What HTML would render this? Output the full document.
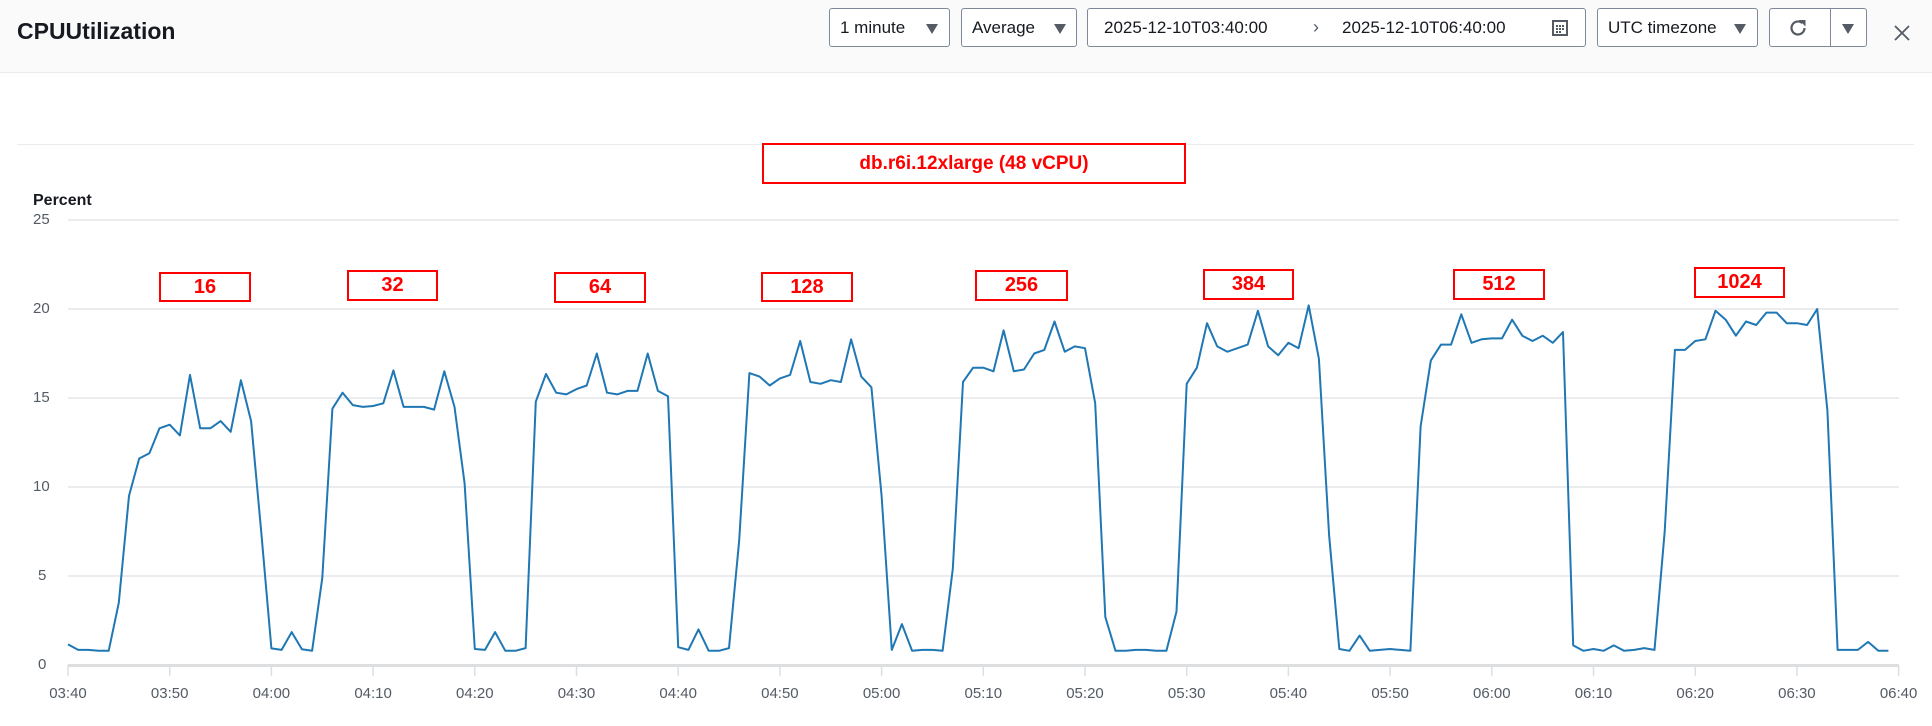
<!DOCTYPE html>
<html><head><meta charset="utf-8">
<style>
*{margin:0;padding:0;box-sizing:border-box}
body{width:1932px;height:726px;background:#fff;font-family:"Liberation Sans",sans-serif;position:relative;overflow:hidden;color:#16191f}
.hdr{position:absolute;left:0;top:0;width:1932px;height:73px;background:#fafafa;border-bottom:1px solid #e9ebed}
.title{position:absolute;left:17px;top:18px;font-size:23px;font-weight:bold;color:#16191f}
.btn{position:absolute;top:8px;height:39px;background:#fff;border:1px solid #7d8998;border-radius:3px;font-size:17px;line-height:37px;color:#16191f;padding-left:10px}
.tri{position:absolute;top:15px;width:0;height:0;border-left:6px solid transparent;border-right:6px solid transparent;border-top:10px solid #545b64}
.ann{position:absolute;border:2px solid #ff0000;color:#ff0000;font-weight:bold;font-size:20px;text-align:center;line-height:26px;background:#fff}
.yl{position:absolute;left:33px;font-size:15px;color:#545b64}
.xl{position:absolute;top:685px;font-size:15px;color:#545b64;width:60px;margin-left:-30px;text-align:center}
</style></head><body>
<div class="hdr">
 <div class="title">CPUUtilization</div>
 <div class="btn" style="left:829px;width:121px">1 minute<span class="tri" style="left:96px"></span></div>
 <div class="btn" style="left:961px;width:116px">Average<span class="tri" style="left:92px"></span></div>
 <div class="btn" style="left:1087px;width:499px;padding-left:16px">2025-12-10T03:40:00
  <span style="position:absolute;left:225px;top:0;color:#545b64;font-size:18px">&#x203A;</span>
  <span style="position:absolute;left:254px;top:0">2025-12-10T06:40:00</span>
  <svg style="position:absolute;left:464px;top:11px" width="16" height="16" viewBox="0 0 16 16"><rect x="1" y="1" width="14" height="14" fill="none" stroke="#545b64" stroke-width="2"/><g fill="#545b64"><rect x="4" y="5" width="2" height="2"/><rect x="7" y="5" width="2" height="2"/><rect x="10" y="5" width="2" height="2"/><rect x="4" y="8" width="2" height="2"/><rect x="7" y="8" width="2" height="2"/><rect x="10" y="8" width="2" height="2"/><rect x="4" y="11" width="2" height="2"/><rect x="7" y="11" width="2" height="2"/></g></svg>
 </div>
 <div class="btn" style="left:1597px;width:161px">UTC timezone<span class="tri" style="left:136px"></span></div>
 <div class="btn" style="left:1769px;width:98px;padding:0">
  <svg style="position:absolute;left:17px;top:8px" width="22" height="22" viewBox="0 0 22 22"><path d="M17.5 11a6.5 6.5 0 1 1-2.2-4.9" fill="none" stroke="#545b64" stroke-width="2.2"/><path d="M12 3h6.5v6.5z" fill="#545b64"/></svg>
  <span style="position:absolute;left:60px;top:0;width:1px;height:37px;background:#7d8998"></span>
  <span class="tri" style="left:72px"></span>
 </div>
 <svg style="position:absolute;left:1894px;top:25px" width="16" height="16" viewBox="0 0 16 16"><path d="M1 1L15 15M15 1L1 15" stroke="#545b64" stroke-width="1.8"/></svg>
</div>
<div style="position:absolute;left:17px;top:144px;width:1897px;height:1px;background:#e9ebed"></div>
<div style="position:absolute;left:33px;top:192px;font-size:16px;font-weight:bold;color:#16191f">Percent</div>
<div class="yl" style="top:211px">25</div>
<div class="yl" style="top:300px">20</div>
<div class="yl" style="top:389px">15</div>
<div class="yl" style="top:478px">10</div>
<div class="yl" style="top:567px;left:38px">5</div>
<div class="yl" style="top:656px;left:38px">0</div>
<svg id="ch" style="position:absolute;left:0;top:0" width="1932" height="726">
 <g stroke="#e4e6e8" stroke-width="1.5">
  <line x1="68" y1="220" x2="1899" y2="220"/><line x1="68" y1="309" x2="1899" y2="309"/>
  <line x1="68" y1="398" x2="1899" y2="398"/><line x1="68" y1="487" x2="1899" y2="487"/>
  <line x1="68" y1="576" x2="1899" y2="576"/>
 </g>
 <line x1="68" y1="665.5" x2="1899" y2="665.5" stroke="#dcdee0" stroke-width="3"/>
 <g id="ticks" stroke="#dcdee0" stroke-width="1.5"></g>
 <polyline id="ln" fill="none" stroke="#1f77b4" stroke-width="2" stroke-linejoin="round" points=""/>
</svg>
<div id="xls"></div>
<div class="ann" style="left:762px;top:143px;width:424px;height:41px;line-height:37px;font-size:19px">db.r6i.12xlarge (48 vCPU)</div>
<div class="ann" style="left:159px;top:272px;width:92px;height:30px">16</div>
<div class="ann" style="left:347px;top:270px;width:91px;height:31px">32</div>
<div class="ann" style="left:554px;top:272px;width:92px;height:31px">64</div>
<div class="ann" style="left:761px;top:272px;width:92px;height:30px">128</div>
<div class="ann" style="left:975px;top:270px;width:93px;height:31px">256</div>
<div class="ann" style="left:1203px;top:269px;width:91px;height:31px">384</div>
<div class="ann" style="left:1453px;top:269px;width:92px;height:31px">512</div>
<div class="ann" style="left:1694px;top:267px;width:91px;height:31px">1024</div>
<script>
var v=[1.16,0.85,0.85,0.8,0.8,3.5,9.5,11.6,11.9,13.3,13.5,12.9,16.3,13.3,13.3,13.7,13.1,16.0,13.7,7.5,
0.93,0.85,1.85,0.88,0.8,4.9,14.4,15.3,14.6,14.5,14.55,14.7,16.55,14.5,14.5,14.5,14.35,16.5,14.5,10.2,
0.9,0.85,1.85,0.8,0.8,0.95,14.8,16.35,15.3,15.2,15.5,15.7,17.5,15.3,15.2,15.4,15.4,17.5,15.4,15.1,
1.0,0.85,2.0,0.8,0.8,0.95,7,16.4,16.2,15.7,16.1,16.3,18.2,15.9,15.8,16.0,15.9,18.3,16.2,15.6,9.5,
0.85,2.3,0.8,0.85,0.85,0.8,5.4,15.9,16.7,16.7,16.5,18.8,16.5,16.6,17.5,17.7,19.3,17.6,17.9,17.8,14.7,2.7,
0.8,0.8,0.85,0.85,0.8,0.8,3.0,15.8,16.7,19.2,17.9,17.6,17.8,18.0,19.9,17.9,17.4,18.1,17.8,20.2,17.2,7.3,0.9,0.8,1.65,
0.8,0.85,0.9,0.85,0.8,13.4,17.1,18.0,18.0,19.7,18.1,18.3,18.35,18.35,19.4,18.5,18.2,18.5,18.1,18.7,1.1,
0.8,0.9,0.8,1.1,0.8,0.85,0.95,0.85,7.5,17.7,17.7,18.2,18.3,19.9,19.4,18.5,19.3,19.1,19.8,19.8,19.2,19.2,19.1,20.0,14.3,
0.85,0.85,0.85,1.3,0.8,0.8];
var s=10.17,p=[];
for(var i=0;i<v.length;i++)p.push((68+i*s).toFixed(1)+","+(665-v[i]*17.8).toFixed(1));
document.getElementById("ln").setAttribute("points",p.join(" "));
var lab=["03:40","03:50","04:00","04:10","04:20","04:30","04:40","04:50","05:00","05:10","05:20","05:30","05:40","05:50","06:00","06:10","06:20","06:30","06:40"];
var t="",h="";
for(var j=0;j<lab.length;j++){var x=68+j*10*s;t+='<line x1="'+x+'" y1="665" x2="'+x+'" y2="676"/>';h+='<div class="xl" style="left:'+x+'px">'+lab[j]+'</div>';}
document.getElementById("ticks").innerHTML=t;
document.getElementById("xls").innerHTML=h;
</script>
</body></html>
